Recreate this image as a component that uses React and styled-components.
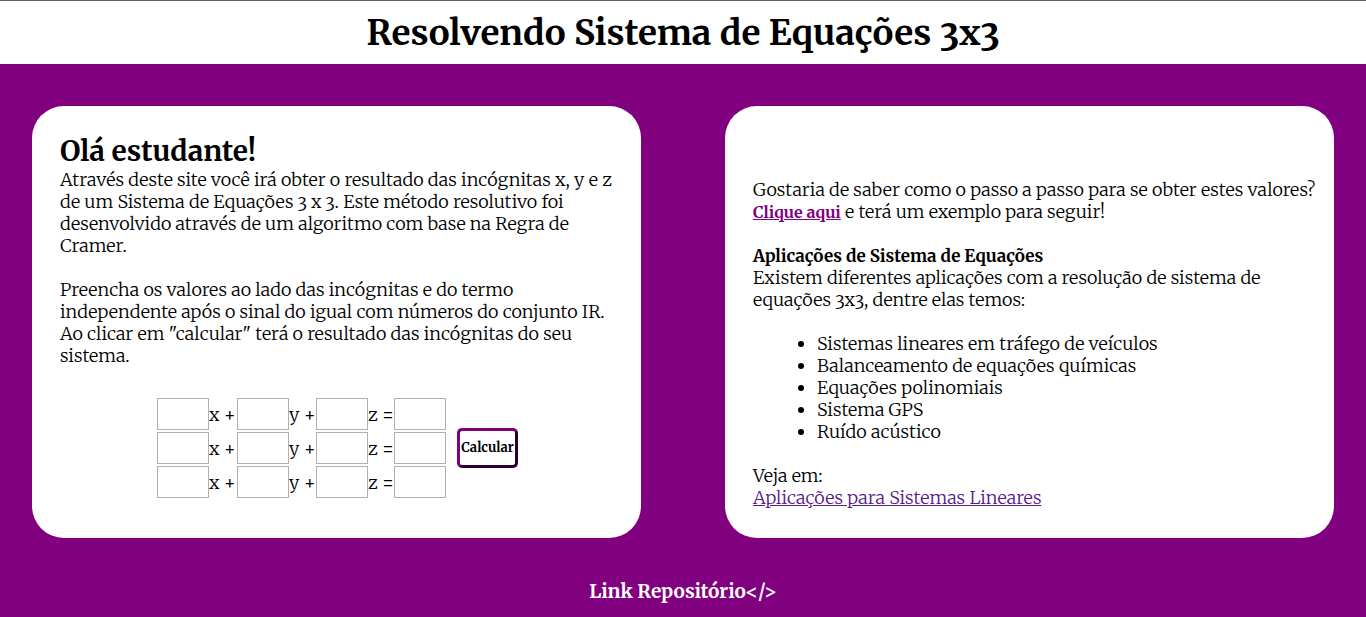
import React from "react";
import styled, { createGlobalStyle } from "styled-components";

const GlobalStyle = createGlobalStyle`
  * {
    box-sizing: border-box;
    margin: 0;
    padding: 0;
  }

  body {
    background: purple;
    color: #000;
    font-family: Merriweather, "Liberation Serif", serif;
    font-size: 18px;
    font-weight: 300;
    font-variant-numeric: oldstyle-nums;
    line-height: 22px;
  }
`;

const Header = styled.header`
  padding: 9px 16px 7px;
  border-top: 1px solid #5f6067;
  background: #fff;
  text-align: center;
`;

const Title = styled.h1`
  font-size: 35px;
  font-weight: 700;
  line-height: 47px;
`;

const Main = styled.main`
  display: grid;
  grid-template-columns: 1fr 1fr;
  gap: 84px;
  padding: 42px 32px;
`;

const Card = styled.section`
  display: flex;
  flex-direction: column;
  gap: 22px;
  padding: 28px;
  border-radius: 32px;
  background: #fff;
`;

const InfoCard = styled(Card)`
  justify-content: flex-end;
  padding: 28px 16px 29px 28px;
`;

const Heading = styled.h2`
  font-size: 28px;
  font-weight: 700;
  line-height: 35px;
`;

const Subheading = styled.h3`
  font-size: 17px;
  font-weight: 700;
  line-height: 22px;
`;

const Form = styled.form`
  display: flex;
  justify-content: center;
  align-items: center;
  gap: 11px;
  padding: 9px 0 12px 2px;
`;

const Equations = styled.div`
  display: flex;
  flex-direction: column;
  gap: 2px;
`;

const Equation = styled.div`
  display: grid;
  grid-template-columns: 52px 28px 52px 27px 52px 26px 52px;
  align-items: center;
`;

const Field = styled.input`
  width: 100%;
  height: 32px;
  padding: 0 4px;
  border: 1px solid #b0b0b0;
  background: #fff;
  font: inherit;
`;

const Unknown = styled.label`
  padding-top: 2px;
  white-space: nowrap;
`;

const Submit = styled.button`
  width: 61px;
  height: 40px;
  padding-bottom: 2px;
  border: 3px outset purple;
  border-radius: 5px;
  background: #fff;
  color: #000;
  font-family: inherit;
  font-size: 13px;
  font-weight: 700;
  white-space: nowrap;
  cursor: pointer;
`;

const Link = styled.a`
  color: #551a8b;
`;

const StrongLink = styled.a`
  color: purple;
  font-size: 16px;
  font-weight: 700;
`;

const List = styled.ul`
  padding-left: 64px;
`;

const Footer = styled.footer`
  padding-bottom: 16px;
  text-align: center;
`;

const RepoLink = styled.a`
  color: #fff;
  font-size: 19px;
  font-weight: 700;
  text-decoration: none;
`;

const rows = [1, 2, 3];
const unknowns = [
  ["x", "+"],
  ["y", "+"],
  ["z", "="],
];
const applications = [
  "Sistemas lineares em tráfego de veículos",
  "Balanceamento de equações químicas",
  "Equações polinomiais",
  "Sistema GPS",
  "Ruído acústico",
];

export default function App() {
  return (
    <>
      <GlobalStyle />
      <Header>
        <Title>Resolvendo Sistema de Equações 3x3</Title>
      </Header>
      <Main>
        <Card>
          <div>
            <Heading>Olá estudante!</Heading>
            <p>
              Através deste site você irá obter o resultado das incógnitas x, y e z
              <br />
              de um Sistema de Equações 3 x 3. Este método resolutivo foi
              <br />
              desenvolvido através de um algoritmo com base na Regra de
              <br />
              Cramer.
            </p>
          </div>
          <p>
            Preencha os valores ao lado das incógnitas e do termo
            <br />
            independente após o sinal do igual com números do conjunto IR.
            <br />
            Ao clicar em "calcular" terá o resultado das incógnitas do seu
            <br />
            sistema.
          </p>
          <Form onSubmit={(e) => e.preventDefault()}>
            <Equations>
              {rows.map((row) => (
                <Equation key={row}>
                  {unknowns.map(([name, sign]) => (
                    <React.Fragment key={name}>
                      <Field id={name + row} type="text" inputMode="decimal" />
                      <Unknown htmlFor={name + row}>
                        {name} {sign}
                      </Unknown>
                    </React.Fragment>
                  ))}
                  <Field type="text" inputMode="decimal" aria-label={`Termo independente ${row}`} />
                </Equation>
              ))}
            </Equations>
            <Submit type="submit">Calcular</Submit>
          </Form>
        </Card>
        <InfoCard>
          <p>
            Gostaria de saber como o passo a passo para se obter estes valores?
            <br />
            <StrongLink href="#exemplo">Clique aqui</StrongLink> e terá um exemplo para seguir!
          </p>
          <div>
            <Subheading>Aplicações de Sistema de Equações</Subheading>
            <p>
              Existem diferentes aplicações com a resolução de sistema de
              <br />
              equações 3x3, dentre elas temos:
            </p>
          </div>
          <List>
            {applications.map((text) => (
              <li key={text}>{text}</li>
            ))}
          </List>
          <p>
            Veja em:
            <br />
            <Link href="#aplicacoes">Aplicações para Sistemas Lineares</Link>
          </p>
        </InfoCard>
      </Main>
      <Footer>
        <RepoLink href="#repositorio">Link Repositório&lt;/&gt;</RepoLink>
      </Footer>
    </>
  );
}
